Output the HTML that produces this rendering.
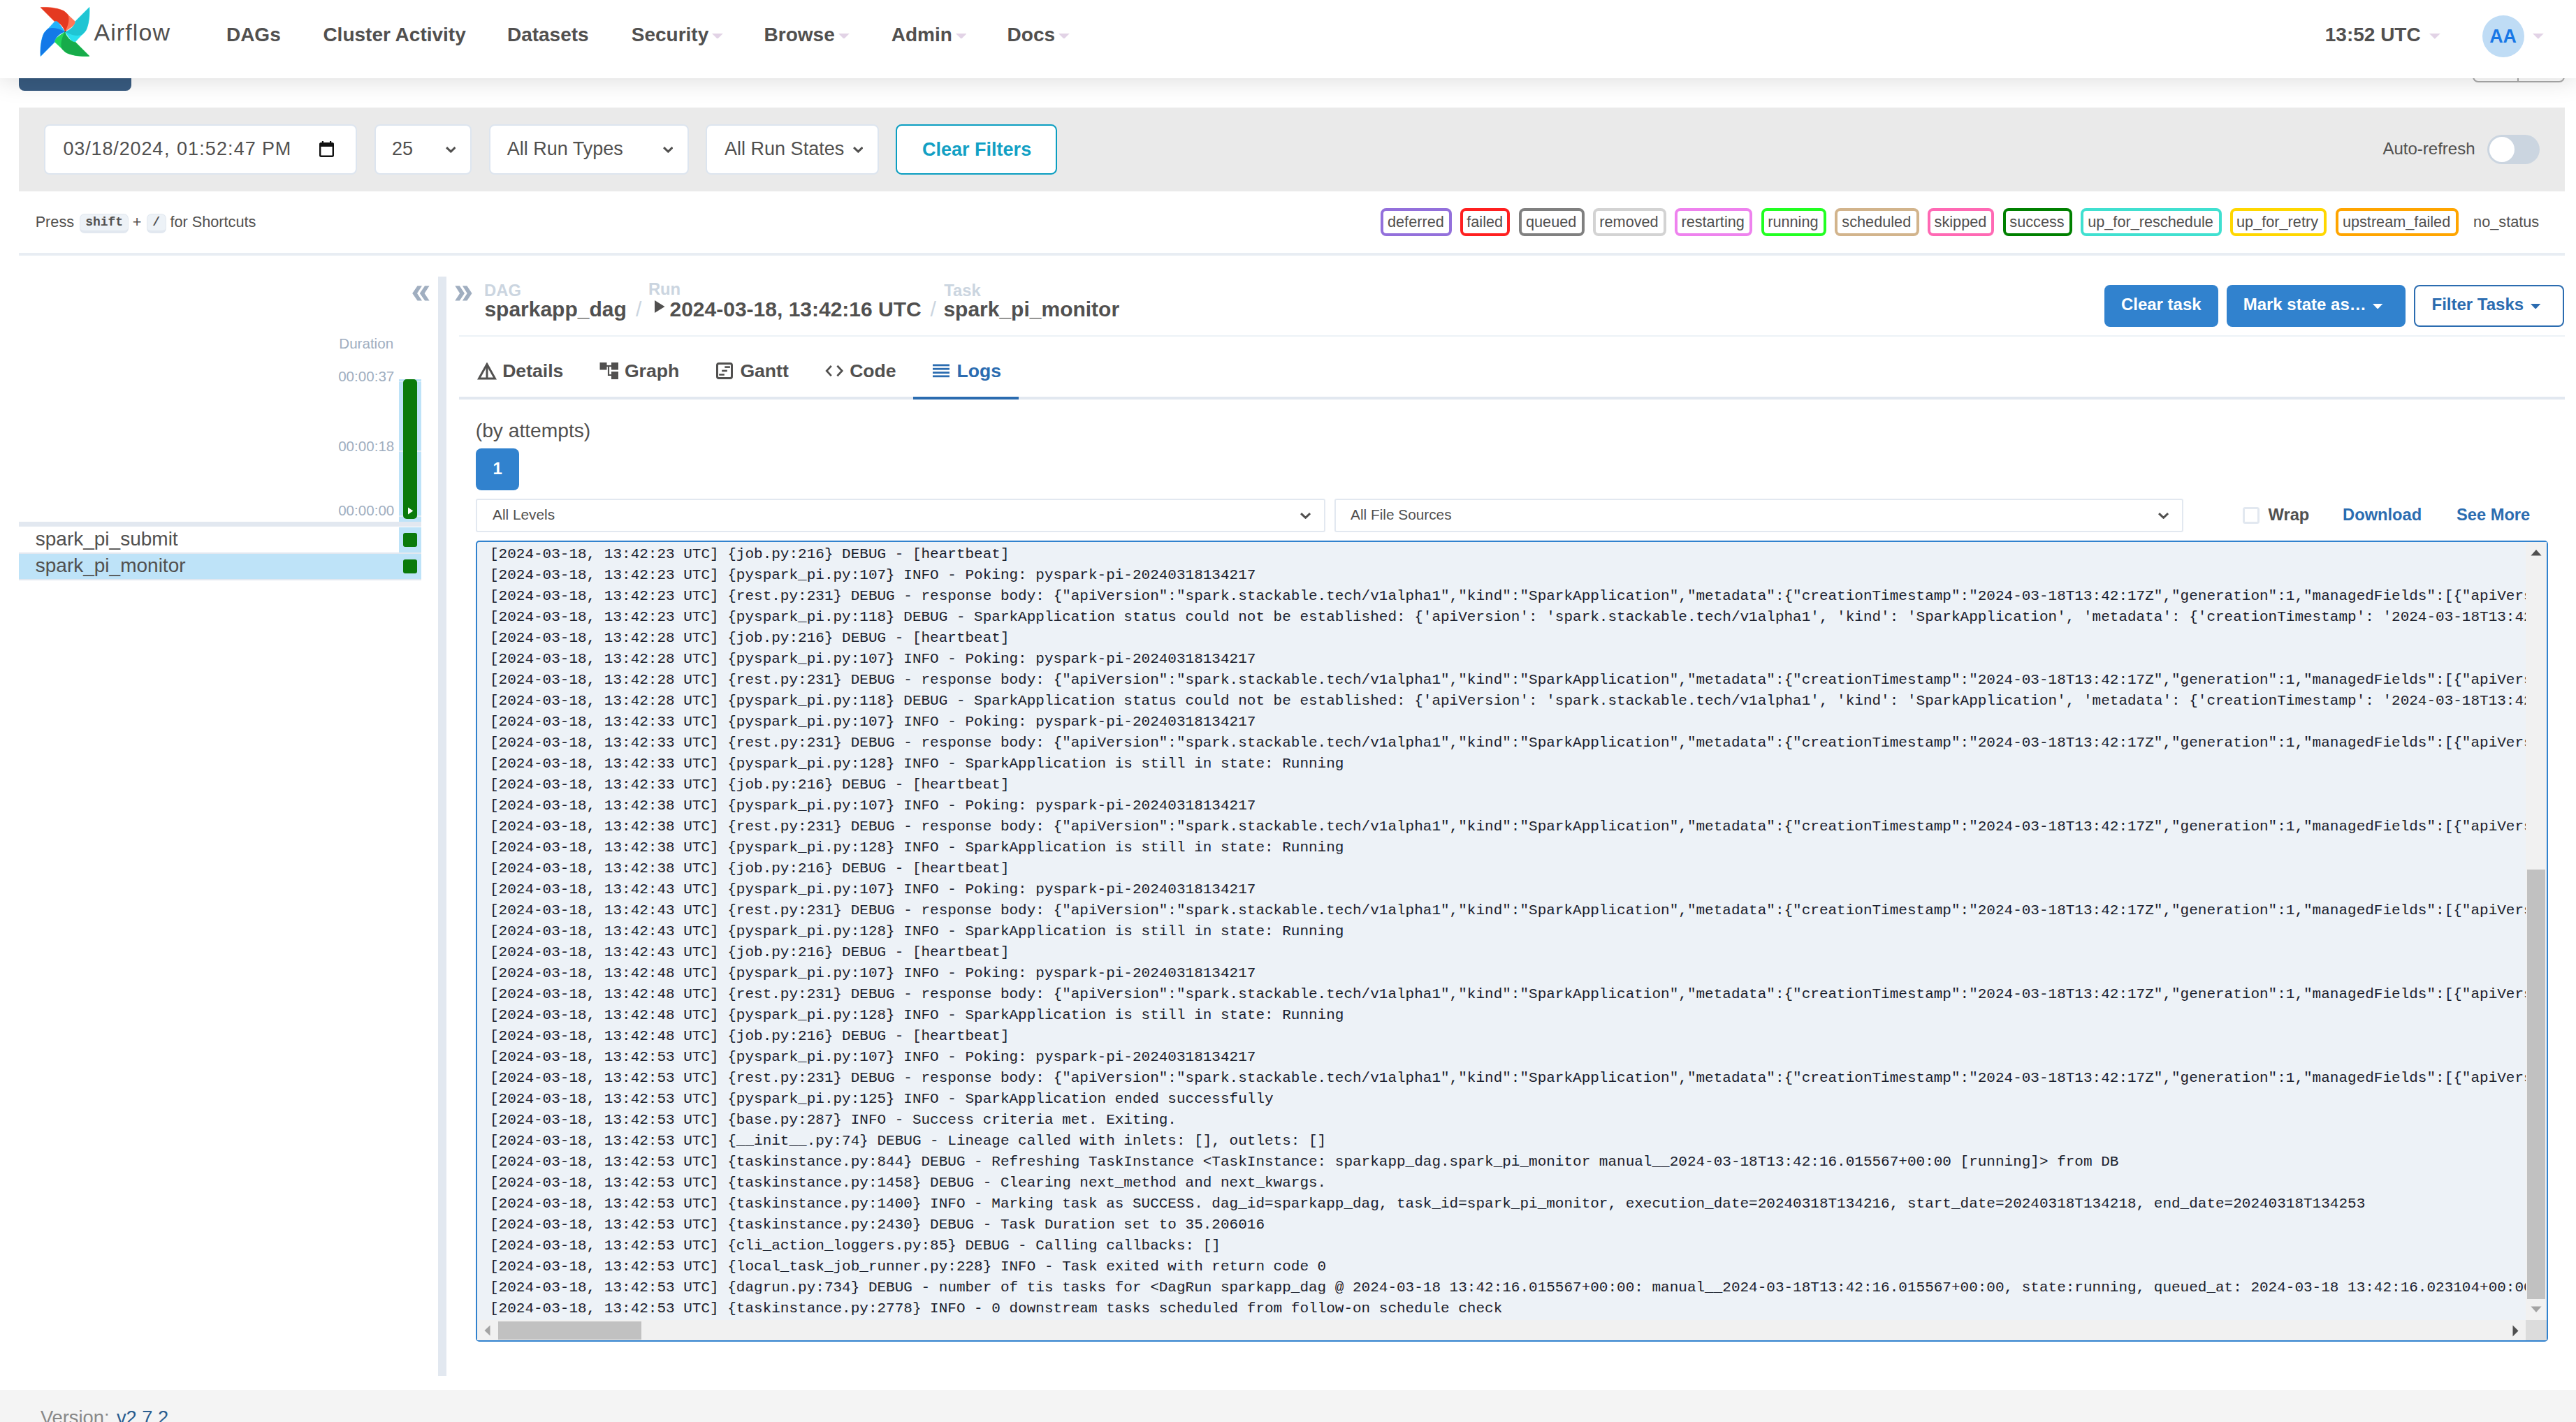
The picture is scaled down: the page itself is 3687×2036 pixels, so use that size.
<!DOCTYPE html>
<html><head><meta charset="utf-8"><title>Airflow</title>
<style>
html,body{margin:0;padding:0;}
body{width:3687px;height:2036px;position:relative;overflow:hidden;background:#fff;font-family:"Liberation Sans",sans-serif;color:#51504f;}
.a{position:absolute;}
.t{position:absolute;white-space:pre;line-height:1;}
</style></head><body>
<div class="a" style="left:0px;top:0px;width:3687px;height:112px;background:#fff;z-index:5;box-shadow:0 0 38px rgba(0,0,0,.16);"></div>
<svg class="a" style="left:58px;top:10px;z-index:6;overflow:visible" width="70" height="71" viewBox="0 0 70 71"><g transform="rotate(0 35 35.5)"><path fill="#ff7557" stroke="#ff7557" stroke-width="0.7" stroke-linejoin="round" d="M0,0.6 C10,0 24,1 33,5.5 C36,7.5 38,9.5 39.6,11.6 L49.4,20.8 C50.4,22 50.3,23.6 48.9,25.1 C45,28.6 40,31.8 35.2,35.3 C33,29 29,24 23.5,21.2 C21.8,20.4 20.8,20.5 20.2,20.7 Z"/><path fill="#e43921" d="M0,0.6 C10,0 24,1 33,5.5 C36,7.5 38,9.5 39.6,11.6 C41.4,17.5 40.4,25.5 35.2,35.3 C33,29 29,24 23.5,21.2 C21.8,20.4 20.8,20.5 20.2,20.7 Z"/></g><g transform="rotate(90 35 35.5)"><path fill="#2ae0ef" stroke="#2ae0ef" stroke-width="0.7" stroke-linejoin="round" d="M0,0.6 C10,0 24,1 33,5.5 C36,7.5 38,9.5 39.6,11.6 L49.4,20.8 C50.4,22 50.3,23.6 48.9,25.1 C45,28.6 40,31.8 35.2,35.3 C33,29 29,24 23.5,21.2 C21.8,20.4 20.8,20.5 20.2,20.7 Z"/><path fill="#1fc5d3" d="M0,0.6 C10,0 24,1 33,5.5 C36,7.5 38,9.5 39.6,11.6 C41.4,17.5 40.4,25.5 35.2,35.3 C33,29 29,24 23.5,21.2 C21.8,20.4 20.8,20.5 20.2,20.7 Z"/></g><g transform="rotate(180 35 35.5)"><path fill="#21d65b" stroke="#21d65b" stroke-width="0.7" stroke-linejoin="round" d="M0,0.6 C10,0 24,1 33,5.5 C36,7.5 38,9.5 39.6,11.6 L49.4,20.8 C50.4,22 50.3,23.6 48.9,25.1 C45,28.6 40,31.8 35.2,35.3 C33,29 29,24 23.5,21.2 C21.8,20.4 20.8,20.5 20.2,20.7 Z"/><path fill="#17ab4a" d="M0,0.6 C10,0 24,1 33,5.5 C36,7.5 38,9.5 39.6,11.6 C41.4,17.5 40.4,25.5 35.2,35.3 C33,29 29,24 23.5,21.2 C21.8,20.4 20.8,20.5 20.2,20.7 Z"/></g><g transform="rotate(270 35 35.5)"><path fill="#22b2fa" stroke="#22b2fa" stroke-width="0.7" stroke-linejoin="round" d="M0,0.6 C10,0 24,1 33,5.5 C36,7.5 38,9.5 39.6,11.6 L49.4,20.8 C50.4,22 50.3,23.6 48.9,25.1 C45,28.6 40,31.8 35.2,35.3 C33,29 29,24 23.5,21.2 C21.8,20.4 20.8,20.5 20.2,20.7 Z"/><path fill="#1379e8" d="M0,0.6 C10,0 24,1 33,5.5 C36,7.5 38,9.5 39.6,11.6 C41.4,17.5 40.4,25.5 35.2,35.3 C33,29 29,24 23.5,21.2 C21.8,20.4 20.8,20.5 20.2,20.7 Z"/></g><circle cx="35.2" cy="35.3" r="0.9" fill="#333"/></svg>
<div class="t" style="left:134.38px;top:29.12px;font-size:34px;font-family:'Liberation Sans',sans-serif;font-weight:400;color:#51504f;z-index:6;letter-spacing:1.1px;">Airflow</div>
<div class="t" style="left:323.93px;top:35.70px;font-size:28px;font-family:'Liberation Sans',sans-serif;font-weight:700;color:#51504f;z-index:6;">DAGs</div>
<div class="t" style="left:462.38px;top:35.70px;font-size:28px;font-family:'Liberation Sans',sans-serif;font-weight:700;color:#51504f;z-index:6;">Cluster Activity</div>
<div class="t" style="left:725.92px;top:35.70px;font-size:28px;font-family:'Liberation Sans',sans-serif;font-weight:700;color:#51504f;z-index:6;">Datasets</div>
<div class="t" style="left:903.75px;top:35.70px;font-size:28px;font-family:'Liberation Sans',sans-serif;font-weight:700;color:#51504f;z-index:6;">Security</div>
<svg class="a" style="left:1019px;top:47.5px;z-index:6" width="15.8" height="7.8" viewBox="0 0 15.8 7.8"><polygon points="0,0 15.8,0 7.9,7.8" fill="#e2d3e6"/></svg>
<div class="t" style="left:1093.62px;top:35.70px;font-size:28px;font-family:'Liberation Sans',sans-serif;font-weight:700;color:#51504f;z-index:6;">Browse</div>
<svg class="a" style="left:1199.8px;top:47.5px;z-index:6" width="15.8" height="7.8" viewBox="0 0 15.8 7.8"><polygon points="0,0 15.8,0 7.9,7.8" fill="#e2d3e6"/></svg>
<div class="t" style="left:1275.75px;top:35.70px;font-size:28px;font-family:'Liberation Sans',sans-serif;font-weight:700;color:#51504f;z-index:6;">Admin</div>
<svg class="a" style="left:1367.5px;top:47.5px;z-index:6" width="15.8" height="7.8" viewBox="0 0 15.8 7.8"><polygon points="0,0 15.8,0 7.9,7.8" fill="#e2d3e6"/></svg>
<div class="t" style="left:1441.62px;top:35.70px;font-size:28px;font-family:'Liberation Sans',sans-serif;font-weight:700;color:#51504f;z-index:6;">Docs</div>
<svg class="a" style="left:1515px;top:47.5px;z-index:6" width="15.8" height="7.8" viewBox="0 0 15.8 7.8"><polygon points="0,0 15.8,0 7.9,7.8" fill="#e2d3e6"/></svg>
<div class="t" style="left:3327.75px;top:35.80px;font-size:28px;font-family:'Liberation Sans',sans-serif;font-weight:700;color:#51504f;z-index:6;">13:52 UTC</div>
<svg class="a" style="left:3477px;top:48px;z-index:6" width="15.8" height="7.8" viewBox="0 0 15.8 7.8"><polygon points="0,0 15.8,0 7.9,7.8" fill="#e2d3e6"/></svg>
<div class="a" style="left:3553px;top:22px;width:60px;height:60px;background:#bfdcf5;border-radius:50%;z-index:6;"></div>
<div class="t" style="left:3563.28px;top:38.51px;font-size:26.8px;font-family:'Liberation Sans',sans-serif;font-weight:700;color:#1877e6;z-index:6;">AA</div>
<svg class="a" style="left:3625px;top:48px;z-index:6" width="15.8" height="7.8" viewBox="0 0 15.8 7.8"><polygon points="0,0 15.8,0 7.9,7.8" fill="#e2d3e6"/></svg>
<div class="a" style="left:27px;top:60px;width:161px;height:70px;background:#385b80;border-radius:0 0 8px 8px;z-index:1;"></div>
<div class="a" style="left:3539px;top:60px;width:132px;height:57.5px;border:2px solid #ababab;border-radius:0 0 8px 8px;z-index:1;box-sizing:border-box;"></div>
<div class="a" style="left:3603px;top:60px;width:2px;height:57px;background:#ababab;z-index:1;"></div>
<div class="a" style="left:27px;top:154px;width:3644px;height:120px;background:#eaeaea;"></div>
<div class="a" style="left:63.4px;top:178.2px;width:447.5px;height:71.70000000000002px;background:#fff;border:2px solid #dde5ef;border-radius:8px;box-sizing:border-box;"></div>
<div class="t" style="left:90.50px;top:199.94px;font-size:27px;font-family:'Liberation Sans',sans-serif;font-weight:400;color:#51504f;letter-spacing:0.85px;">03/18/2024</div>
<div class="t" style="left:235.00px;top:199.94px;font-size:27px;font-family:'Liberation Sans',sans-serif;font-weight:400;color:#51504f;">,</div>
<div class="t" style="left:253.00px;top:199.94px;font-size:27px;font-family:'Liberation Sans',sans-serif;font-weight:400;color:#51504f;letter-spacing:1.1px;">01:52:47</div>
<div class="t" style="left:374.95px;top:199.94px;font-size:27px;font-family:'Liberation Sans',sans-serif;font-weight:400;color:#51504f;letter-spacing:0.9px;">PM</div>
<svg class="a" style="left:457px;top:202px" width="21" height="23" viewBox="0 0 21 23"><rect x="1.2" y="3.2" width="18.6" height="18.6" rx="1.5" fill="none" stroke="#111" stroke-width="2.4"/><rect x="0.5" y="2.5" width="20" height="5.5" rx="1.2" fill="#111"/><rect x="3.8" y="0" width="2.2" height="4" fill="#111"/><rect x="15" y="0" width="2.2" height="4" fill="#111"/></svg>
<div class="a" style="left:535.5px;top:178.2px;width:139.10000000000002px;height:71.70000000000002px;background:#fff;border:2px solid #dde5ef;border-radius:8px;box-sizing:border-box;"></div>
<div class="t" style="left:561.02px;top:200.14px;font-size:27px;font-family:'Liberation Sans',sans-serif;font-weight:400;color:#51504f;">25</div>
<svg class="a" style="left:637.6px;top:209.8px" width="14.6" height="9.2" viewBox="0 0 14.6 9.2"><polyline points="1.06,1.06 7.30,7.08 13.54,1.06" fill="none" stroke="#51504f" stroke-width="3" stroke-linejoin="miter"/></svg>
<div class="a" style="left:699.5px;top:178.2px;width:286.1px;height:71.70000000000002px;background:#fff;border:2px solid #dde5ef;border-radius:8px;box-sizing:border-box;"></div>
<div class="t" style="left:725.77px;top:200.14px;font-size:27px;font-family:'Liberation Sans',sans-serif;font-weight:400;color:#51504f;">All Run Types</div>
<svg class="a" style="left:948.6px;top:209.8px" width="14.6" height="9.2" viewBox="0 0 14.6 9.2"><polyline points="1.06,1.06 7.30,7.08 13.54,1.06" fill="none" stroke="#51504f" stroke-width="3" stroke-linejoin="miter"/></svg>
<div class="a" style="left:1010.3px;top:178.2px;width:247.29999999999995px;height:71.70000000000002px;background:#fff;border:2px solid #dde5ef;border-radius:8px;box-sizing:border-box;"></div>
<div class="t" style="left:1037.08px;top:200.14px;font-size:27px;font-family:'Liberation Sans',sans-serif;font-weight:400;color:#51504f;">All Run States</div>
<svg class="a" style="left:1220.6px;top:209.8px" width="14.6" height="9.2" viewBox="0 0 14.6 9.2"><polyline points="1.06,1.06 7.30,7.08 13.54,1.06" fill="none" stroke="#51504f" stroke-width="3" stroke-linejoin="miter"/></svg>
<div class="a" style="left:1282px;top:178px;width:231px;height:71.69999999999999px;border:2px solid #0a9ec1;border-radius:8.5px;box-sizing:border-box;background:#fff;"></div>
<div class="t" style="left:1320.08px;top:200.64px;font-size:27px;font-family:'Liberation Sans',sans-serif;font-weight:700;color:#12a0c4;">Clear Filters</div>
<div class="t" style="left:3410.50px;top:201.28px;font-size:24px;font-family:'Liberation Sans',sans-serif;font-weight:400;color:#51504f;">Auto-refresh</div>
<div class="a" style="left:3560px;top:193px;width:75px;height:42px;background:#cbd5e0;border-radius:21px;"></div>
<div class="a" style="left:3563px;top:196px;width:36px;height:36px;background:#fff;border-radius:50%;"></div>
<div class="t" style="left:50.65px;top:307.03px;font-size:21.7px;font-family:'Liberation Sans',sans-serif;font-weight:400;color:#51504f;">Press</div>
<div class="a" style="left:114px;top:306.2px;width:69.5px;height:27.80000000000001px;background:#edf2f7;border-radius:7px;border:1px solid #e2e8f0;border-bottom:4px solid #e2e8f0;box-sizing:border-box;"></div>
<div class="t" style="left:122.17px;top:308.50px;font-size:18px;font-family:'Liberation Mono',monospace;font-weight:700;color:#51504f;">shift</div>
<div class="t" style="left:189.70px;top:307.03px;font-size:21.7px;font-family:'Liberation Sans',sans-serif;font-weight:400;color:#51504f;">+</div>
<div class="a" style="left:210px;top:306.2px;width:27.599999999999994px;height:27.80000000000001px;background:#edf2f7;border-radius:7px;border:1px solid #e2e8f0;border-bottom:4px solid #e2e8f0;box-sizing:border-box;"></div>
<div class="t" style="left:218.15px;top:308.50px;font-size:18px;font-family:'Liberation Mono',monospace;font-weight:700;color:#51504f;">/</div>
<div class="t" style="left:243.45px;top:307.03px;font-size:21.7px;font-family:'Liberation Sans',sans-serif;font-weight:400;color:#51504f;">for Shortcuts</div>
<div class="a" style="left:1976px;top:297.8px;width:102px;height:39.89999999999998px;border:4px solid #9370db;border-radius:8px;box-sizing:border-box;"></div>
<div class="t" style="left:1986.00px;top:307.13px;font-size:21.7px;font-family:'Liberation Sans',sans-serif;font-weight:400;color:#51504f;">deferred</div>
<div class="a" style="left:2090px;top:297.8px;width:71px;height:39.89999999999998px;border:4px solid #ff2020;border-radius:8px;box-sizing:border-box;"></div>
<div class="t" style="left:2099.25px;top:307.13px;font-size:21.7px;font-family:'Liberation Sans',sans-serif;font-weight:400;color:#51504f;">failed</div>
<div class="a" style="left:2174px;top:297.8px;width:93.59999999999991px;height:39.89999999999998px;border:4px solid #808080;border-radius:8px;box-sizing:border-box;"></div>
<div class="t" style="left:2183.99px;top:307.13px;font-size:21.7px;font-family:'Liberation Sans',sans-serif;font-weight:400;color:#51504f;">queued</div>
<div class="a" style="left:2280px;top:297.8px;width:104.69999999999982px;height:39.89999999999998px;border:4px solid #d3d3d3;border-radius:8px;box-sizing:border-box;"></div>
<div class="t" style="left:2289.29px;top:307.13px;font-size:21.7px;font-family:'Liberation Sans',sans-serif;font-weight:400;color:#51504f;">removed</div>
<div class="a" style="left:2397px;top:297.8px;width:111px;height:39.89999999999998px;border:4px solid #ee82ee;border-radius:8px;box-sizing:border-box;"></div>
<div class="t" style="left:2406.44px;top:307.13px;font-size:21.7px;font-family:'Liberation Sans',sans-serif;font-weight:400;color:#51504f;">restarting</div>
<div class="a" style="left:2521px;top:297.8px;width:92.5px;height:39.89999999999998px;border:4px solid #22ff22;border-radius:8px;box-sizing:border-box;"></div>
<div class="t" style="left:2530.19px;top:307.13px;font-size:21.7px;font-family:'Liberation Sans',sans-serif;font-weight:400;color:#51504f;">running</div>
<div class="a" style="left:2626px;top:297.8px;width:120.59999999999991px;height:39.89999999999998px;border:4px solid #d2b48c;border-radius:8px;box-sizing:border-box;"></div>
<div class="t" style="left:2636.36px;top:307.13px;font-size:21.7px;font-family:'Liberation Sans',sans-serif;font-weight:400;color:#51504f;">scheduled</div>
<div class="a" style="left:2759px;top:297.8px;width:95px;height:39.89999999999998px;border:4px solid #ff69b4;border-radius:8px;box-sizing:border-box;"></div>
<div class="t" style="left:2768.62px;top:307.13px;font-size:21.7px;font-family:'Liberation Sans',sans-serif;font-weight:400;color:#51504f;">skipped</div>
<div class="a" style="left:2867px;top:297.8px;width:98.59999999999991px;height:39.89999999999998px;border:4px solid #008000;border-radius:8px;box-sizing:border-box;"></div>
<div class="t" style="left:2876.36px;top:307.13px;font-size:21.7px;font-family:'Liberation Sans',sans-serif;font-weight:400;color:#51504f;">success</div>
<div class="a" style="left:2978px;top:297.8px;width:202px;height:39.89999999999998px;border:4px solid #40e0d0;border-radius:8px;box-sizing:border-box;"></div>
<div class="t" style="left:2988.19px;top:307.13px;font-size:21.7px;font-family:'Liberation Sans',sans-serif;font-weight:400;color:#51504f;">up_for_reschedule</div>
<div class="a" style="left:3192px;top:297.8px;width:138px;height:39.89999999999998px;border:4px solid #ffd700;border-radius:8px;box-sizing:border-box;"></div>
<div class="t" style="left:3201.06px;top:307.13px;font-size:21.7px;font-family:'Liberation Sans',sans-serif;font-weight:400;color:#51504f;">up_for_retry</div>
<div class="a" style="left:3343px;top:297.8px;width:175.69999999999982px;height:39.89999999999998px;border:4px solid #ffa500;border-radius:8px;box-sizing:border-box;"></div>
<div class="t" style="left:3352.91px;top:307.13px;font-size:21.7px;font-family:'Liberation Sans',sans-serif;font-weight:400;color:#51504f;">upstream_failed</div>
<div class="t" style="left:3540.12px;top:307.13px;font-size:21.7px;font-family:'Liberation Sans',sans-serif;font-weight:400;color:#51504f;">no_status</div>
<div class="a" style="left:27px;top:362px;width:3644px;height:4px;background:#e8edf3;"></div>
<div class="a" style="left:627px;top:396px;width:12px;height:1573.6px;background:#e2e8f0;"></div>
<svg class="a" style="left:590px;top:409px" width="26" height="22" viewBox="0 0 26 22"><polygon points="7.50,0.30 14.00,0.30 7.00,11.00 14.00,21.50 7.50,21.50 0.20,11.00" fill="#a0aec0"/><polygon points="18.10,0.30 24.60,0.30 17.60,11.00 24.60,21.50 18.10,21.50 10.80,11.00" fill="#a0aec0"/></svg>
<svg class="a" style="left:651px;top:409px" width="26" height="22" viewBox="0 0 26 22"><polygon points="0.30,0.30 6.80,0.30 13.90,11.00 6.80,21.50 0.30,21.50 7.10,11.00" fill="#a0aec0"/><polygon points="10.90,0.30 17.40,0.30 24.50,11.00 17.40,21.50 10.90,21.50 17.70,11.00" fill="#a0aec0"/></svg>
<div class="t" style="left:485.27px;top:481.56px;font-size:20.6px;font-family:'Liberation Sans',sans-serif;font-weight:400;color:#a0aec0;">Duration</div>
<div class="t" style="left:484.15px;top:528.56px;font-size:20.6px;font-family:'Liberation Sans',sans-serif;font-weight:400;color:#a0aec0;">00:00:37</div>
<div class="t" style="left:484.15px;top:629.16px;font-size:20.6px;font-family:'Liberation Sans',sans-serif;font-weight:400;color:#a0aec0;">00:00:18</div>
<div class="t" style="left:484.15px;top:721.26px;font-size:20.6px;font-family:'Liberation Sans',sans-serif;font-weight:400;color:#a0aec0;">00:00:00</div>
<div class="a" style="left:571px;top:543px;width:32px;height:204px;background:#bee3f8;"></div>
<div class="a" style="left:571px;top:545.5px;width:32px;height:1.5px;background:#e2eef7;"></div>
<div class="a" style="left:571px;top:645px;width:32px;height:1.5px;background:#e2eef7;"></div>
<div class="a" style="left:571px;top:738px;width:32px;height:1.5px;background:#e2eef7;"></div>
<div class="a" style="left:577px;top:543px;width:20px;height:199.60000000000002px;background:#0b7a0b;border-radius:5px;"></div>
<svg class="a" style="left:583px;top:725.5px" width="10" height="11" viewBox="0 0 10 11"><polygon points="1,0.5 8.3,5.5 1,10.5" fill="#fff"/></svg>
<div class="a" style="left:27px;top:747px;width:576px;height:7px;background:#e2e8f0;"></div>
<div class="a" style="left:571px;top:754.5px;width:32px;height:36.200000000000045px;background:#bee3f8;"></div>
<div class="t" style="left:50.75px;top:758.30px;font-size:28px;font-family:'Liberation Sans',sans-serif;font-weight:400;color:#51504f;">spark_pi_submit</div>
<div class="a" style="left:577px;top:763px;width:20px;height:19.600000000000023px;background:#0b7a0b;border-radius:3px;"></div>
<div class="a" style="left:27px;top:791px;width:576px;height:2px;background:#e2e8f0;"></div>
<div class="a" style="left:27px;top:793px;width:576px;height:35.5px;background:#bee3f8;"></div>
<div class="a" style="left:27px;top:828.5px;width:576px;height:2.5px;background:#e2e8f0;"></div>
<div class="t" style="left:50.75px;top:796.30px;font-size:28px;font-family:'Liberation Sans',sans-serif;font-weight:400;color:#51504f;">spark_pi_monitor</div>
<div class="a" style="left:577px;top:801px;width:20px;height:19.600000000000023px;background:#0b7a0b;border-radius:3px;"></div>
<div class="t" style="left:693.08px;top:404.05px;font-size:23.8px;font-family:'Liberation Sans',sans-serif;font-weight:700;color:#cbd5e0;">DAG</div>
<div class="t" style="left:927.88px;top:402.25px;font-size:23.8px;font-family:'Liberation Sans',sans-serif;font-weight:700;color:#cbd5e0;">Run</div>
<div class="t" style="left:1351.25px;top:404.05px;font-size:23.8px;font-family:'Liberation Sans',sans-serif;font-weight:700;color:#cbd5e0;">Task</div>
<div class="t" style="left:693.38px;top:428.00px;font-size:30px;font-family:'Liberation Sans',sans-serif;font-weight:700;color:#51504f;">sparkapp_dag</div>
<div class="t" style="left:910.00px;top:428.00px;font-size:30px;font-family:'Liberation Sans',sans-serif;font-weight:400;color:#cbd5e0;">/</div>
<svg class="a" style="left:937px;top:430px" width="15" height="18" viewBox="0 0 15 18"><polygon points="0,0 14.5,9 0,18" fill="#51504f"/></svg>
<div class="t" style="left:958.50px;top:428.00px;font-size:30px;font-family:'Liberation Sans',sans-serif;font-weight:700;color:#51504f;">2024-03-18, 13:42:16 UTC</div>
<div class="t" style="left:1331.50px;top:428.00px;font-size:30px;font-family:'Liberation Sans',sans-serif;font-weight:400;color:#cbd5e0;">/</div>
<div class="t" style="left:1350.38px;top:428.00px;font-size:30px;font-family:'Liberation Sans',sans-serif;font-weight:700;color:#51504f;">spark_pi_monitor</div>
<div class="a" style="left:3012px;top:408px;width:163px;height:59.5px;background:#3182ce;border-radius:8px;"></div>
<div class="t" style="left:3035.90px;top:424.18px;font-size:24px;font-family:'Liberation Sans',sans-serif;font-weight:700;color:#fff;">Clear task</div>
<div class="a" style="left:3187px;top:408px;width:255.69999999999982px;height:59.5px;background:#3182ce;border-radius:8px;"></div>
<div class="t" style="left:3210.68px;top:424.18px;font-size:24px;font-family:'Liberation Sans',sans-serif;font-weight:700;color:#fff;">Mark state as…</div>
<svg class="a" style="left:3395.5px;top:434.5px;z-index:1" width="14.3" height="7.6" viewBox="0 0 14.3 7.6"><polygon points="0,0 14.3,0 7.15,7.6" fill="#fff"/></svg>
<div class="a" style="left:3455.3px;top:408px;width:215.19999999999982px;height:59.5px;border:2px solid #2b6cb0;border-radius:8px;box-sizing:border-box;"></div>
<div class="t" style="left:3480.47px;top:424.18px;font-size:24px;font-family:'Liberation Sans',sans-serif;font-weight:700;color:#2b6cb0;">Filter Tasks</div>
<svg class="a" style="left:3622px;top:434.5px;z-index:1" width="14.3" height="7.6" viewBox="0 0 14.3 7.6"><polygon points="0,0 14.3,0 7.15,7.6" fill="#2b6cb0"/></svg>
<div class="a" style="left:657px;top:480px;width:3014px;height:2px;background:#edf2f7;"></div>
<svg class="a" style="left:683px;top:519px" width="28" height="25" viewBox="0 0 28 25"><polygon points="14,2.5 25.5,23 2.5,23" fill="none" stroke="#51504f" stroke-width="3" stroke-linejoin="miter"/><line x1="14" y1="3" x2="14" y2="23" stroke="#51504f" stroke-width="3"/></svg>
<div class="t" style="left:719.15px;top:517.78px;font-size:26.6px;font-family:'Liberation Sans',sans-serif;font-weight:700;color:#51504f;">Details</div>
<svg class="a" style="left:858px;top:519px" width="28" height="24" viewBox="0 0 28 24"><rect x="0.5" y="0" width="10" height="10.5" fill="#51504f"/><rect x="17" y="0" width="10" height="10.5" fill="#51504f"/><rect x="17" y="13" width="10" height="11" fill="#51504f"/><line x1="10" y1="5" x2="17" y2="5" stroke="#51504f" stroke-width="2.2"/><polyline points="13,5 13,18 17,18" fill="none" stroke="#51504f" stroke-width="2.2"/></svg>
<div class="t" style="left:893.88px;top:517.78px;font-size:26.6px;font-family:'Liberation Sans',sans-serif;font-weight:700;color:#51504f;">Graph</div>
<svg class="a" style="left:1025px;top:519px" width="24" height="24" viewBox="0 0 24 24"><rect x="1.5" y="1.5" width="21" height="21" rx="2.5" fill="none" stroke="#51504f" stroke-width="3"/><rect x="12.3" y="5.3" width="7.6" height="2.6" fill="#51504f"/><rect x="8.2" y="10.6" width="7.6" height="2.6" fill="#51504f"/><rect x="4.2" y="16.1" width="7.6" height="2.6" fill="#51504f"/></svg>
<div class="t" style="left:1059.38px;top:517.78px;font-size:26.6px;font-family:'Liberation Sans',sans-serif;font-weight:700;color:#51504f;">Gantt</div>
<svg class="a" style="left:1180px;top:521px" width="28" height="19" viewBox="0 0 28 19"><polyline points="9.8,2.8 3.2,10 9.8,17.2" fill="none" stroke="#51504f" stroke-width="2.7"/><polyline points="18.4,2.8 25.2,10 18.4,17.2" fill="none" stroke="#51504f" stroke-width="2.7"/></svg>
<div class="t" style="left:1216.17px;top:517.78px;font-size:26.6px;font-family:'Liberation Sans',sans-serif;font-weight:700;color:#51504f;">Code</div>
<svg class="a" style="left:1335px;top:521px" width="24" height="20" viewBox="0 0 24 20"><rect x="0" y="0.5" width="24" height="2.8" fill="#2b6cb0"/><rect x="0" y="5.8" width="24" height="2.8" fill="#2b6cb0"/><rect x="0" y="11.1" width="24" height="2.8" fill="#2b6cb0"/><rect x="0" y="16.4" width="24" height="2.8" fill="#2b6cb0"/></svg>
<div class="t" style="left:1369.45px;top:517.78px;font-size:26.6px;font-family:'Liberation Sans',sans-serif;font-weight:700;color:#2b6cb0;">Logs</div>
<div class="a" style="left:657px;top:568px;width:3014px;height:4px;background:#e2e8f0;"></div>
<div class="a" style="left:1307px;top:568px;width:151px;height:4px;background:#2b6cb0;"></div>
<div class="t" style="left:680.75px;top:601.53px;font-size:28.2px;font-family:'Liberation Sans',sans-serif;font-weight:400;color:#51504f;">(by attempts)</div>
<div class="a" style="left:681px;top:642px;width:62px;height:59.799999999999955px;background:#3182ce;border-radius:8px;"></div>
<div class="t" style="left:705.38px;top:658.88px;font-size:24px;font-family:'Liberation Sans',sans-serif;font-weight:700;color:#fff;">1</div>
<div class="a" style="left:681px;top:714.4px;width:1216.4px;height:47.60000000000002px;border:2px solid #e2e8f0;border-radius:3px;box-sizing:border-box;background:#fff;"></div>
<div class="t" style="left:705.10px;top:726.79px;font-size:20.8px;font-family:'Liberation Sans',sans-serif;font-weight:400;color:#51504f;">All Levels</div>
<svg class="a" style="left:1860.5px;top:733.8px" width="15.2" height="9.4" viewBox="0 0 15.2 9.4"><polyline points="1.06,1.06 7.60,7.28 14.14,1.06" fill="none" stroke="#51504f" stroke-width="3" stroke-linejoin="miter"/></svg>
<div class="a" style="left:1910.2px;top:714.4px;width:1215.3px;height:47.60000000000002px;border:2px solid #e2e8f0;border-radius:3px;box-sizing:border-box;background:#fff;"></div>
<div class="t" style="left:1933.10px;top:726.79px;font-size:20.8px;font-family:'Liberation Sans',sans-serif;font-weight:400;color:#51504f;">All File Sources</div>
<svg class="a" style="left:3088.5px;top:733.8px" width="15.2" height="9.4" viewBox="0 0 15.2 9.4"><polyline points="1.06,1.06 7.60,7.28 14.14,1.06" fill="none" stroke="#51504f" stroke-width="3" stroke-linejoin="miter"/></svg>
<div class="a" style="left:3210px;top:726px;width:24px;height:23.600000000000023px;border:3.7px solid #e2e8f0;border-radius:3.5px;box-sizing:border-box;"></div>
<div class="t" style="left:3246.50px;top:725.54px;font-size:23.7px;font-family:'Liberation Sans',sans-serif;font-weight:700;color:#51504f;">Wrap</div>
<div class="t" style="left:3353.07px;top:725.54px;font-size:23.7px;font-family:'Liberation Sans',sans-serif;font-weight:700;color:#2b6cb0;">Download</div>
<div class="t" style="left:3515.95px;top:725.54px;font-size:23.7px;font-family:'Liberation Sans',sans-serif;font-weight:700;color:#2b6cb0;">See More</div>
<div class="a" style="left:681px;top:774px;width:2966px;height:1147px;border:2px solid #3182ce;border-radius:5px;box-sizing:border-box;background:#edf2f7;"></div>
<div class="a" style="left:683px;top:776px;width:2932px;height:1114px;overflow:hidden;"><pre style="margin:0;position:absolute;left:18px;top:2.60px;font-family:'Liberation Mono',monospace;font-size:21px;line-height:30px;color:#1a202c;">[2024-03-18, 13:42:23 UTC] {job.py:216} DEBUG - [heartbeat]
[2024-03-18, 13:42:23 UTC] {pyspark_pi.py:107} INFO - Poking: pyspark-pi-20240318134217
[2024-03-18, 13:42:23 UTC] {rest.py:231} DEBUG - response body: {&quot;apiVersion&quot;:&quot;spark.stackable.tech/v1alpha1&quot;,&quot;kind&quot;:&quot;SparkApplication&quot;,&quot;metadata&quot;:{&quot;creationTimestamp&quot;:&quot;2024-03-18T13:42:17Z&quot;,&quot;generation&quot;:1,&quot;managedFields&quot;:[{&quot;apiVersion&quot;:&quot;spark.stackable.tech/v1alpha1&quot;,&quot;fieldsType&quot;:&quot;FieldsV1&quot;}]}}
[2024-03-18, 13:42:23 UTC] {pyspark_pi.py:118} DEBUG - SparkApplication status could not be established: {&#x27;apiVersion&#x27;: &#x27;spark.stackable.tech/v1alpha1&#x27;, &#x27;kind&#x27;: &#x27;SparkApplication&#x27;, &#x27;metadata&#x27;: {&#x27;creationTimestamp&#x27;: &#x27;2024-03-18T13:42:17Z&#x27;, &#x27;generation&#x27;: 1}}
[2024-03-18, 13:42:28 UTC] {job.py:216} DEBUG - [heartbeat]
[2024-03-18, 13:42:28 UTC] {pyspark_pi.py:107} INFO - Poking: pyspark-pi-20240318134217
[2024-03-18, 13:42:28 UTC] {rest.py:231} DEBUG - response body: {&quot;apiVersion&quot;:&quot;spark.stackable.tech/v1alpha1&quot;,&quot;kind&quot;:&quot;SparkApplication&quot;,&quot;metadata&quot;:{&quot;creationTimestamp&quot;:&quot;2024-03-18T13:42:17Z&quot;,&quot;generation&quot;:1,&quot;managedFields&quot;:[{&quot;apiVersion&quot;:&quot;spark.stackable.tech/v1alpha1&quot;,&quot;fieldsType&quot;:&quot;FieldsV1&quot;}]}}
[2024-03-18, 13:42:28 UTC] {pyspark_pi.py:118} DEBUG - SparkApplication status could not be established: {&#x27;apiVersion&#x27;: &#x27;spark.stackable.tech/v1alpha1&#x27;, &#x27;kind&#x27;: &#x27;SparkApplication&#x27;, &#x27;metadata&#x27;: {&#x27;creationTimestamp&#x27;: &#x27;2024-03-18T13:42:17Z&#x27;, &#x27;generation&#x27;: 1}}
[2024-03-18, 13:42:33 UTC] {pyspark_pi.py:107} INFO - Poking: pyspark-pi-20240318134217
[2024-03-18, 13:42:33 UTC] {rest.py:231} DEBUG - response body: {&quot;apiVersion&quot;:&quot;spark.stackable.tech/v1alpha1&quot;,&quot;kind&quot;:&quot;SparkApplication&quot;,&quot;metadata&quot;:{&quot;creationTimestamp&quot;:&quot;2024-03-18T13:42:17Z&quot;,&quot;generation&quot;:1,&quot;managedFields&quot;:[{&quot;apiVersion&quot;:&quot;spark.stackable.tech/v1alpha1&quot;,&quot;fieldsType&quot;:&quot;FieldsV1&quot;}]}}
[2024-03-18, 13:42:33 UTC] {pyspark_pi.py:128} INFO - SparkApplication is still in state: Running
[2024-03-18, 13:42:33 UTC] {job.py:216} DEBUG - [heartbeat]
[2024-03-18, 13:42:38 UTC] {pyspark_pi.py:107} INFO - Poking: pyspark-pi-20240318134217
[2024-03-18, 13:42:38 UTC] {rest.py:231} DEBUG - response body: {&quot;apiVersion&quot;:&quot;spark.stackable.tech/v1alpha1&quot;,&quot;kind&quot;:&quot;SparkApplication&quot;,&quot;metadata&quot;:{&quot;creationTimestamp&quot;:&quot;2024-03-18T13:42:17Z&quot;,&quot;generation&quot;:1,&quot;managedFields&quot;:[{&quot;apiVersion&quot;:&quot;spark.stackable.tech/v1alpha1&quot;,&quot;fieldsType&quot;:&quot;FieldsV1&quot;}]}}
[2024-03-18, 13:42:38 UTC] {pyspark_pi.py:128} INFO - SparkApplication is still in state: Running
[2024-03-18, 13:42:38 UTC] {job.py:216} DEBUG - [heartbeat]
[2024-03-18, 13:42:43 UTC] {pyspark_pi.py:107} INFO - Poking: pyspark-pi-20240318134217
[2024-03-18, 13:42:43 UTC] {rest.py:231} DEBUG - response body: {&quot;apiVersion&quot;:&quot;spark.stackable.tech/v1alpha1&quot;,&quot;kind&quot;:&quot;SparkApplication&quot;,&quot;metadata&quot;:{&quot;creationTimestamp&quot;:&quot;2024-03-18T13:42:17Z&quot;,&quot;generation&quot;:1,&quot;managedFields&quot;:[{&quot;apiVersion&quot;:&quot;spark.stackable.tech/v1alpha1&quot;,&quot;fieldsType&quot;:&quot;FieldsV1&quot;}]}}
[2024-03-18, 13:42:43 UTC] {pyspark_pi.py:128} INFO - SparkApplication is still in state: Running
[2024-03-18, 13:42:43 UTC] {job.py:216} DEBUG - [heartbeat]
[2024-03-18, 13:42:48 UTC] {pyspark_pi.py:107} INFO - Poking: pyspark-pi-20240318134217
[2024-03-18, 13:42:48 UTC] {rest.py:231} DEBUG - response body: {&quot;apiVersion&quot;:&quot;spark.stackable.tech/v1alpha1&quot;,&quot;kind&quot;:&quot;SparkApplication&quot;,&quot;metadata&quot;:{&quot;creationTimestamp&quot;:&quot;2024-03-18T13:42:17Z&quot;,&quot;generation&quot;:1,&quot;managedFields&quot;:[{&quot;apiVersion&quot;:&quot;spark.stackable.tech/v1alpha1&quot;,&quot;fieldsType&quot;:&quot;FieldsV1&quot;}]}}
[2024-03-18, 13:42:48 UTC] {pyspark_pi.py:128} INFO - SparkApplication is still in state: Running
[2024-03-18, 13:42:48 UTC] {job.py:216} DEBUG - [heartbeat]
[2024-03-18, 13:42:53 UTC] {pyspark_pi.py:107} INFO - Poking: pyspark-pi-20240318134217
[2024-03-18, 13:42:53 UTC] {rest.py:231} DEBUG - response body: {&quot;apiVersion&quot;:&quot;spark.stackable.tech/v1alpha1&quot;,&quot;kind&quot;:&quot;SparkApplication&quot;,&quot;metadata&quot;:{&quot;creationTimestamp&quot;:&quot;2024-03-18T13:42:17Z&quot;,&quot;generation&quot;:1,&quot;managedFields&quot;:[{&quot;apiVersion&quot;:&quot;spark.stackable.tech/v1alpha1&quot;,&quot;fieldsType&quot;:&quot;FieldsV1&quot;}]}}
[2024-03-18, 13:42:53 UTC] {pyspark_pi.py:125} INFO - SparkApplication ended successfully
[2024-03-18, 13:42:53 UTC] {base.py:287} INFO - Success criteria met. Exiting.
[2024-03-18, 13:42:53 UTC] {__init__.py:74} DEBUG - Lineage called with inlets: [], outlets: []
[2024-03-18, 13:42:53 UTC] {taskinstance.py:844} DEBUG - Refreshing TaskInstance &lt;TaskInstance: sparkapp_dag.spark_pi_monitor manual__2024-03-18T13:42:16.015567+00:00 [running]&gt; from DB
[2024-03-18, 13:42:53 UTC] {taskinstance.py:1458} DEBUG - Clearing next_method and next_kwargs.
[2024-03-18, 13:42:53 UTC] {taskinstance.py:1400} INFO - Marking task as SUCCESS. dag_id=sparkapp_dag, task_id=spark_pi_monitor, execution_date=20240318T134216, start_date=20240318T134218, end_date=20240318T134253
[2024-03-18, 13:42:53 UTC] {taskinstance.py:2430} DEBUG - Task Duration set to 35.206016
[2024-03-18, 13:42:53 UTC] {cli_action_loggers.py:85} DEBUG - Calling callbacks: []
[2024-03-18, 13:42:53 UTC] {local_task_job_runner.py:228} INFO - Task exited with return code 0
[2024-03-18, 13:42:53 UTC] {dagrun.py:734} DEBUG - number of tis tasks for &lt;DagRun sparkapp_dag @ 2024-03-18 13:42:16.015567+00:00: manual__2024-03-18T13:42:16.015567+00:00, state:running, queued_at: 2024-03-18 13:42:16.023104+00:00. externally triggered: True&gt;: 1 task(s)
[2024-03-18, 13:42:53 UTC] {taskinstance.py:2778} INFO - 0 downstream tasks scheduled from follow-on schedule check</pre></div>
<div class="a" style="left:3615px;top:776px;width:30px;height:1114px;background:#f1f1f1;"></div>
<div class="a" style="left:3617px;top:1245px;width:26px;height:614.5px;background:#c1c1c1;"></div>
<svg class="a" style="left:3622px;top:786px" width="16" height="10" viewBox="0 0 16 10"><polygon points="0.5,9.5 8,1 15.5,9.5" fill="#505050"/></svg>
<svg class="a" style="left:3622px;top:1870px" width="16" height="10" viewBox="0 0 16 10"><polygon points="0.5,0.5 8,9 15.5,0.5" fill="#a3a3a3"/></svg>
<div class="a" style="left:683px;top:1890px;width:2932px;height:29px;background:#f1f1f1;"></div>
<div class="a" style="left:713px;top:1892px;width:205px;height:26px;background:#c1c1c1;"></div>
<div class="a" style="left:3615px;top:1890px;width:30px;height:29px;background:#dcdcdc;"></div>
<svg class="a" style="left:693px;top:1897px" width="9" height="16" viewBox="0 0 9 16"><polygon points="8.5,0.5 0.5,8 8.5,15.5" fill="#a3a3a3"/></svg>
<svg class="a" style="left:3596px;top:1896.5px" width="9" height="17" viewBox="0 0 9 17"><polygon points="0.5,0.5 8.5,8.5 0.5,16.5" fill="#505050"/></svg>
<div class="a" style="left:0px;top:1990px;width:3687px;height:46px;background:#f4f4f4;"></div>
<div class="t" style="left:57.88px;top:2016.39px;font-size:27.3px;font-family:'Liberation Sans',sans-serif;font-weight:400;color:#888888;">Version:</div>
<div class="t" style="left:166.88px;top:2016.39px;font-size:27.3px;font-family:'Liberation Sans',sans-serif;font-weight:400;color:#2a5d8f;">v2.7.2</div>
</body></html>
